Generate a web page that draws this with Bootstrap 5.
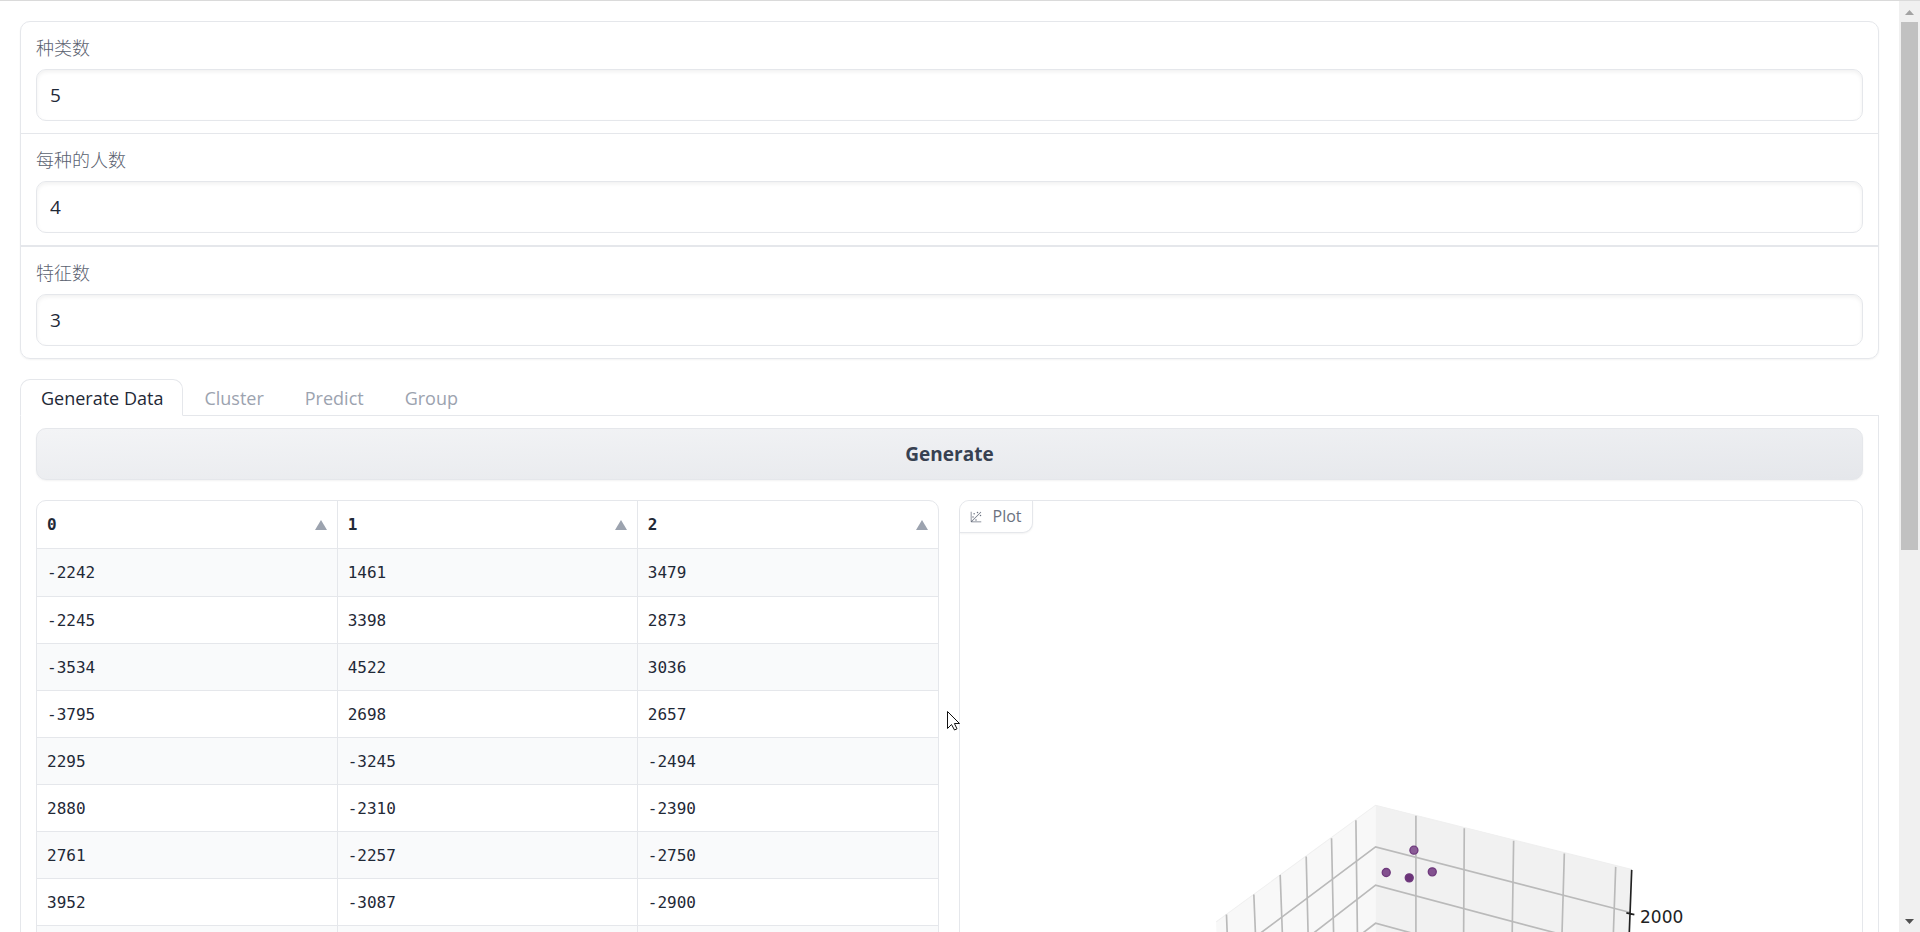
<!DOCTYPE html>
<html lang="zh-CN">
<head>
<meta charset="utf-8">
<meta name="viewport" content="width=device-width, initial-scale=1">
<title>Cluster</title>
<link href="https://cdn.jsdelivr.net/npm/bootstrap@5.3.0/dist/css/bootstrap.min.css" rel="stylesheet">
<script src="https://cdn.jsdelivr.net/npm/bootstrap@5.3.0/dist/js/bootstrap.bundle.min.js" defer></script>
<style>
:root { --line: #e5e7eb; --ink: #1f2937; --muted: #6b7280; --soft: #9ca3af; }
body { font-family: "Open Sans", "Noto Sans CJK SC", sans-serif; font-size: 18px; line-height: 25px; color: var(--ink); }
.viewport { border-top: 1px solid #dadada; }
.page { padding: 20px; }
.stack { gap: 20px; }
.fields { border: 1px solid var(--line); border-radius: 10px; box-shadow: 0 1px 2px rgba(0,0,0,.05); }
.field { padding: 13px 15px 12px; border-bottom: 1px solid var(--line); }
.field:nth-child(2) { border-bottom-width: 2px; }
.field:last-child { border-bottom: 0; }
.field label { font-family: "Noto Sans CJK SC", sans-serif; font-weight: 300; color: #5b6270; margin-bottom: 9px; }
.field .form-control { height: 52px; padding: 0 13px; border-color: var(--line); border-radius: 10px; font-size: 19px; color: var(--ink); box-shadow: inset 0 2px 4px rgba(0,0,0,.06); }
.nav-tabs { --bs-nav-tabs-border-color: var(--line); --bs-nav-tabs-border-radius: 10px; }
.nav-tabs .nav-link { padding: 6px 19px 4px 20px; color: var(--soft); }
.nav-tabs .nav-link.active { color: var(--ink); border-color: var(--line) var(--line) #fff; }
.tab-pane-box { border: 1px solid var(--line); border-top: 0; padding: 12px 15px; }
.btn-generate { height: 52px; border: 1px solid var(--line); border-radius: 10px; background: linear-gradient(to bottom right, #f3f4f6, #e5e7eb); color: #374151; font-size: 19px; font-weight: 700; box-shadow: 0 1px 2px rgba(0,0,0,.05); }
.halves { display: grid; grid-template-columns: calc(50% - 11px) 1fr; gap: 20px; }
.frame { border: 1px solid var(--line); border-radius: 10px; }
.data { table-layout: fixed; font-family: "DejaVu Sans Mono", monospace; font-size: 16px; line-height: 24px; color: var(--ink); }
.data th, .data td { height: 47px; padding: 2px 10px 0; border-bottom: 1px solid var(--line); vertical-align: middle; }
.data tr > * + * { border-left: 1px solid var(--line); }
.data thead { box-shadow: 0 1px 3px rgba(0,0,0,.1); }
.data tbody tr:first-child td { height: 48px; }
.data tbody tr:nth-child(odd) { background: #f9fafb; }
.plot-tag { border: solid var(--line); border-width: 0 1px 1px 0; border-radius: 10px 0 10px 0; padding: 3px 10px; gap: 11px; font-size: 16px; color: var(--muted); box-shadow: 0 1px 2px rgba(0,0,0,.05); }
.scroller { width: 21px; background: #f0f0f0; padding: 9px 2px 8px; }
.scroller .thumb { height: 528px; margin-top: 6px; background: #c1c1c1; }
.pointer { left: 947px; top: 711px; }
</style>
</head>
<body class="bg-white">
<div class="viewport d-flex vh-100 overflow-hidden">
  <main class="page stack flex-grow-1 d-flex flex-column">
    <form class="fields">
      <div class="field"><label class="d-block" for="kinds">种类数</label><input class="form-control" id="kinds" value="5"></div>
      <div class="field"><label class="d-block" for="people">每种的人数</label><input class="form-control" id="people" value="4"></div>
      <div class="field"><label class="d-block" for="features">特征数</label><input class="form-control" id="features" value="3"></div>
    </form>
    <section>
      <ul class="nav nav-tabs" role="tablist">
        <li class="nav-item"><button class="nav-link active" type="button" role="tab">Generate Data</button></li>
        <li class="nav-item"><button class="nav-link" type="button" role="tab">Cluster</button></li>
        <li class="nav-item"><button class="nav-link" type="button" role="tab">Predict</button></li>
        <li class="nav-item"><button class="nav-link" type="button" role="tab">Group</button></li>
      </ul>
      <div class="tab-pane-box stack d-flex flex-column">
        <button class="btn btn-generate w-100" type="button">Generate</button>
        <div class="halves">
          <div class="frame overflow-hidden">
            <table class="data w-100">
              <thead><tr>
                <th scope="col"><div class="d-flex justify-content-between align-items-center">0<svg width="12" height="10"><path d="M6 0L12 10H0z" fill="#9ca3af"/></svg></div></th>
                <th scope="col"><div class="d-flex justify-content-between align-items-center">1<svg width="12" height="10"><path d="M6 0L12 10H0z" fill="#9ca3af"/></svg></div></th>
                <th scope="col"><div class="d-flex justify-content-between align-items-center">2<svg width="12" height="10"><path d="M6 0L12 10H0z" fill="#9ca3af"/></svg></div></th>
              </tr></thead>
              <tbody>
                <tr><td>-2242</td><td>1461</td><td>3479</td></tr>
                <tr><td>-2245</td><td>3398</td><td>2873</td></tr>
                <tr><td>-3534</td><td>4522</td><td>3036</td></tr>
                <tr><td>-3795</td><td>2698</td><td>2657</td></tr>
                <tr><td>2295</td><td>-3245</td><td>-2494</td></tr>
                <tr><td>2880</td><td>-2310</td><td>-2390</td></tr>
                <tr><td>2761</td><td>-2257</td><td>-2750</td></tr>
                <tr><td>3952</td><td>-3087</td><td>-2900</td></tr>
                <tr><td></td><td></td><td></td></tr>
              </tbody>
            </table>
          </div>
          <div class="frame position-relative">
            <div class="plot-tag d-inline-flex align-items-center position-absolute top-0 start-0 bg-white">
              <svg width="12" height="12" viewBox="0 0 32 32" fill="#6b7280"><circle cx="20" cy="4" r="2"/><circle cx="8" cy="16" r="2"/><circle cx="28" cy="12" r="2"/><circle cx="11" cy="7" r="2"/><circle cx="16" cy="24" r="2"/><path d="M30 3.4L28.6 2 4 26.600V2H2v26a2 2 0 002 2h26v-2H5.400z"/></svg>
              <span>Plot</span>
            </div>
            <svg class="d-block w-100" viewBox="0 0 902 480" role="img" aria-label="Plot">
              <g transform="translate(230 290) scale(.33333)" fill="none">
                <path d="M78 392L556 42V600H84z" fill="#f8f8f8"/>
                <path d="M556 42L1325 235L1310 600H556z" fill="#f1f1f1"/>
                <path d="M78 392L556 42L1325 235" stroke="#efefef" stroke-width="3"/>
                <g stroke="#bababa" stroke-width="5">
                  <path d="M497 87L504 600M424 141L434 600M348 196L358 600M270 251L283 600M191 310L203 600M109 370L118 600"/>
                  <path d="M677 74V600M822 111L819 600M970 149L963 600M1122 187L1110 600M1276 227L1263 600"/>
                  <path d="M-22 600L556 167L1320 364M144 600L556 282L1315 483M290 600L556 396L1310 600"/>
                </g>
                <path d="M1324 236L1310 600M1308 365L1332 370" stroke="#222" stroke-width="5"/>
                <g stroke="#6f3a7d" stroke-width="4">
                  <circle cx="671" cy="177" r="12" fill="#8a5c96"/><circle cx="588" cy="244" r="12" fill="#83518f"/><circle cx="657" cy="260" r="12" fill="#6b3378"/><circle cx="726" cy="242" r="12" fill="#83518f"/>
                </g>
                <text x="1349" y="396" font-family="DejaVu Sans" font-size="51" fill="#222">2000</text>
              </g>
            </svg>
          </div>
        </div>
      </div>
    </section>
  </main>
  <div class="scroller flex-shrink-0 d-flex flex-column">
    <svg class="mx-auto" width="9" height="6"><path d="M4.500 0L9 5H0z" fill="#a3a3a3"/></svg>
    <div class="thumb"></div>
    <svg class="mx-auto mt-auto" width="9" height="5"><path d="M0 0H9L4.500 5z" fill="#505050"/></svg>
  </div>
</div>
<svg class="pointer position-absolute" width="14" height="20" viewBox="0 0 14 20"><path d="M.5.5V17.500L4.500 13.500L7.500 19L10 17.800L7.400 12.500H12.500z" fill="#fff" stroke="#111"/></svg>
</body>
</html>
